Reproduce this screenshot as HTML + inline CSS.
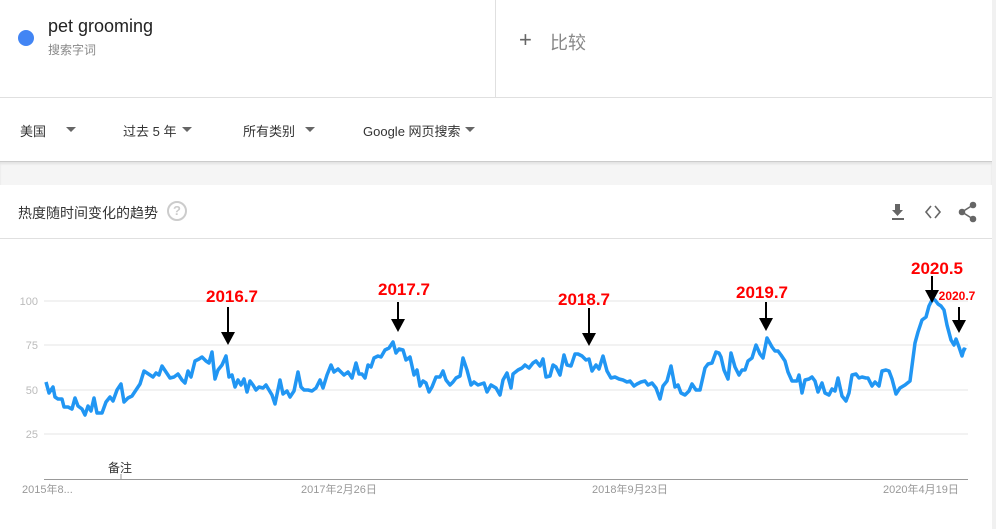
<!DOCTYPE html>
<html><head><meta charset="utf-8"><style>
*{margin:0;padding:0;box-sizing:border-box}
body{width:996px;height:529px;background:#fff;font-family:"Liberation Sans","Noto Sans CJK SC",sans-serif;position:relative;overflow:hidden}
.a{position:absolute}
</style></head><body>
<div class="a" style="left:0;top:0;width:996px;height:98px;border-bottom:1px solid #e0e0e0"></div>
<div class="a" style="left:495px;top:0;width:1px;height:98px;background:#e0e0e0"></div>
<div class="a" style="left:992px;top:0;width:4px;height:529px;background:#f1f1f1"></div>
<div class="a" style="left:18px;top:30px;width:16px;height:16px;border-radius:50%;background:#4285f4"></div>
<div class="a" style="left:48px;top:16px;font-size:18px;color:#222">pet grooming</div>
<div class="a" style="left:48px;top:41px;font-size:12px;color:#888">搜索字词</div>
<div class="a" style="left:519px;top:27px;font-size:22px;color:#666;font-weight:300">+</div>
<div class="a" style="left:550px;top:29px;font-size:18px;color:#888">比较</div>
<div class="a" style="left:20px;top:121px;font-size:13px;color:#333">美国</div>
<div class="a" style="left:123px;top:121px;font-size:13px;color:#333">过去 5 年</div>
<div class="a" style="left:243px;top:121px;font-size:13px;color:#333">所有类别</div>
<div class="a" style="left:363px;top:121px;font-size:13px;color:#333">Google 网页搜索</div>
<svg class="a" style="left:0;top:0" width="996" height="160"><g fill="#666"><path d="M66 127h10l-5 5z"/><path d="M182 127h10l-5 5z"/><path d="M305 127h10l-5 5z"/><path d="M465 127h10l-5 5z"/></g></svg>
<div class="a" style="left:0;top:161px;width:992px;height:24px;background:#f5f5f5;border-top:1px solid #ccc;box-shadow:inset 0 2px 2px rgba(0,0,0,.08)"></div>
<div class="a" style="left:0;top:238px;width:992px;height:1px;background:#e0e0e0"></div>
<div class="a" style="left:18px;top:203px;font-size:14px;color:#333">热度随时间变化的趋势</div>
<div class="a" style="left:167px;top:201px;width:20px;height:20px;border:2px solid #ccc;border-radius:50%;color:#ccc;font-size:13px;font-weight:bold;text-align:center;line-height:16px">?</div>
<svg class="a" style="left:0;top:0" width="996" height="529">
<g fill="#666"><path d="M895 204h5v6h3l-5.5 6-5.5-6h3z"/><rect x="892" y="218" width="12" height="2"/></g>
<path d="M931 206l-5 6 5 6M935 206l5 6-5 6" stroke="#666" stroke-width="1.6" fill="none"/>
<g fill="#666" stroke="#666" stroke-width="1.6"><circle cx="973" cy="205" r="2.5"/><circle cx="962" cy="212" r="2.5"/><circle cx="973" cy="219" r="2.5"/><path d="M973 205l-11 7 11 7" fill="none"/></g>
<g stroke="#e6e6e6" stroke-width="1"><line x1="44" y1="301" x2="968" y2="301"/><line x1="44" y1="345" x2="968" y2="345"/><line x1="44" y1="390" x2="968" y2="390"/><line x1="44" y1="434" x2="968" y2="434"/></g>
<line x1="44" y1="479.5" x2="968" y2="479.5" stroke="#999"/>
<line x1="121" y1="474" x2="121" y2="479" stroke="#999"/>
<g font-size="11" fill="#bbb" text-anchor="end"><text x="38" y="305">100</text><text x="38" y="349">75</text><text x="38" y="394">50</text><text x="38" y="438">25</text></g>
<g font-size="11" fill="#999"><text x="22" y="493">2015年8...</text><text x="301" y="493">2017年2月26日</text><text x="592" y="493">2018年9月23日</text><text x="883" y="493">2020年4月19日</text></g>
<text x="108" y="472" font-size="12" fill="#333">备注</text>
<polyline fill="none" stroke="#2196f3" stroke-width="3.5" stroke-linejoin="round" points="46,382 49,393 53,387 55,397 58,399 62,399 64,407 68,407 72,409 75,398 78,406 82,409 85,415 88,406 91,411 94,398 97,413 102,413 106,402 110,397 113,401 117,390 121,384 124,402 128,398 132,396 136,390 140,384 144,371 150,375 153,377 156,373 159,375 162,366 166,372 170,378 174,377 178,374 182,380 185,383 188,371 191,377 195,361 199,359 202,357 206,361 209,363 212,352 215,379 218,370 222,365 226,356 229,377 232,375 235,387 238,380 241,385 244,379 247,392 250,381 253,385 256,390 259,387 263,388 266,385 269,390 272,395 275,404 280,380 283,394 287,391 290,397 294,391 298,372 301,387 304,390 308,390 312,391 316,388 320,380 323,388 327,375 331,365 334,372 338,369 341,372 344,375 348,372 352,378 356,363 359,374 362,374 365,378 368,365 371,367 374,358 378,356 381,357 385,350 389,348 393,342 396,353 399,349 403,350 406,360 410,357 414,375 417,370 420,386 423,381 426,383 429,392 432,387 436,377 440,377 443,371 446,380 450,385 453,382 456,378 460,376 463,358 467,370 471,385 474,382 478,385 484,383 487,392 491,385 496,388 500,395 503,380 507,373 511,388 513,374 518,370 522,368 525,365 529,368 533,363 536,361 540,366 543,359 546,377 550,376 553,365 556,367 560,375 564,355 567,365 571,366 575,354 578,354 582,356 586,360 589,359 592,371 596,365 599,369 603,356 607,371 611,378 615,377 619,379 623,380 627,382 630,381 634,386 637,384 641,382 645,381 648,385 652,383 656,388 660,399 663,386 667,381 671,366 675,387 678,385 681,393 685,395 689,391 692,384 696,390 700,390 705,368 708,364 712,363 716,352 719,353 721,357 724,370 728,379 731,353 735,367 739,375 742,370 745,370 748,361 752,358 756,345 760,354 763,358 767,338 772,347 775,351 778,351 781,355 785,361 788,372 792,381 797,381 799,375 802,393 805,380 809,379 812,377 815,381 818,392 822,383 825,393 829,395 832,389 835,391 838,378 842,396 846,401 849,393 852,375 856,374 859,378 862,377 866,378 868,378 872,386 875,382 879,386 882,371 886,370 889,371 892,379 896,394 900,388 905,385 910,381 915,343 918,332 922,320 926,317 929,306 932,300 935,300 938,304 941,306 944,310 947,325 951,340 954,345 956,339 959,347 962,356 964,349 966,350"/>
<g font-weight="bold" fill="#f00" font-size="17" text-anchor="middle">
<text x="232" y="302">2016.7</text><text x="404" y="295">2017.7</text><text x="584" y="305">2018.7</text><text x="762" y="298">2019.7</text><text x="937" y="274">2020.5</text><text x="957" y="300" font-size="12">2020.7</text></g>
<g stroke="#000" stroke-width="2"><line x1="228" y1="307" x2="228" y2="334"/><line x1="398" y1="302" x2="398" y2="322"/><line x1="589" y1="308" x2="589" y2="335"/><line x1="766" y1="302" x2="766" y2="320"/><line x1="932" y1="276" x2="932" y2="292"/><line x1="959" y1="307" x2="959" y2="322"/></g>
<g fill="#000"><path d="M221 332h14l-7 13z"/><path d="M391 319h14l-7 13z"/><path d="M582 333h14l-7 13z"/><path d="M759 318h14l-7 13z"/><path d="M925 290h14l-7 13z"/><path d="M952 320h14l-7 13z"/></g>
</svg>
</body></html>
